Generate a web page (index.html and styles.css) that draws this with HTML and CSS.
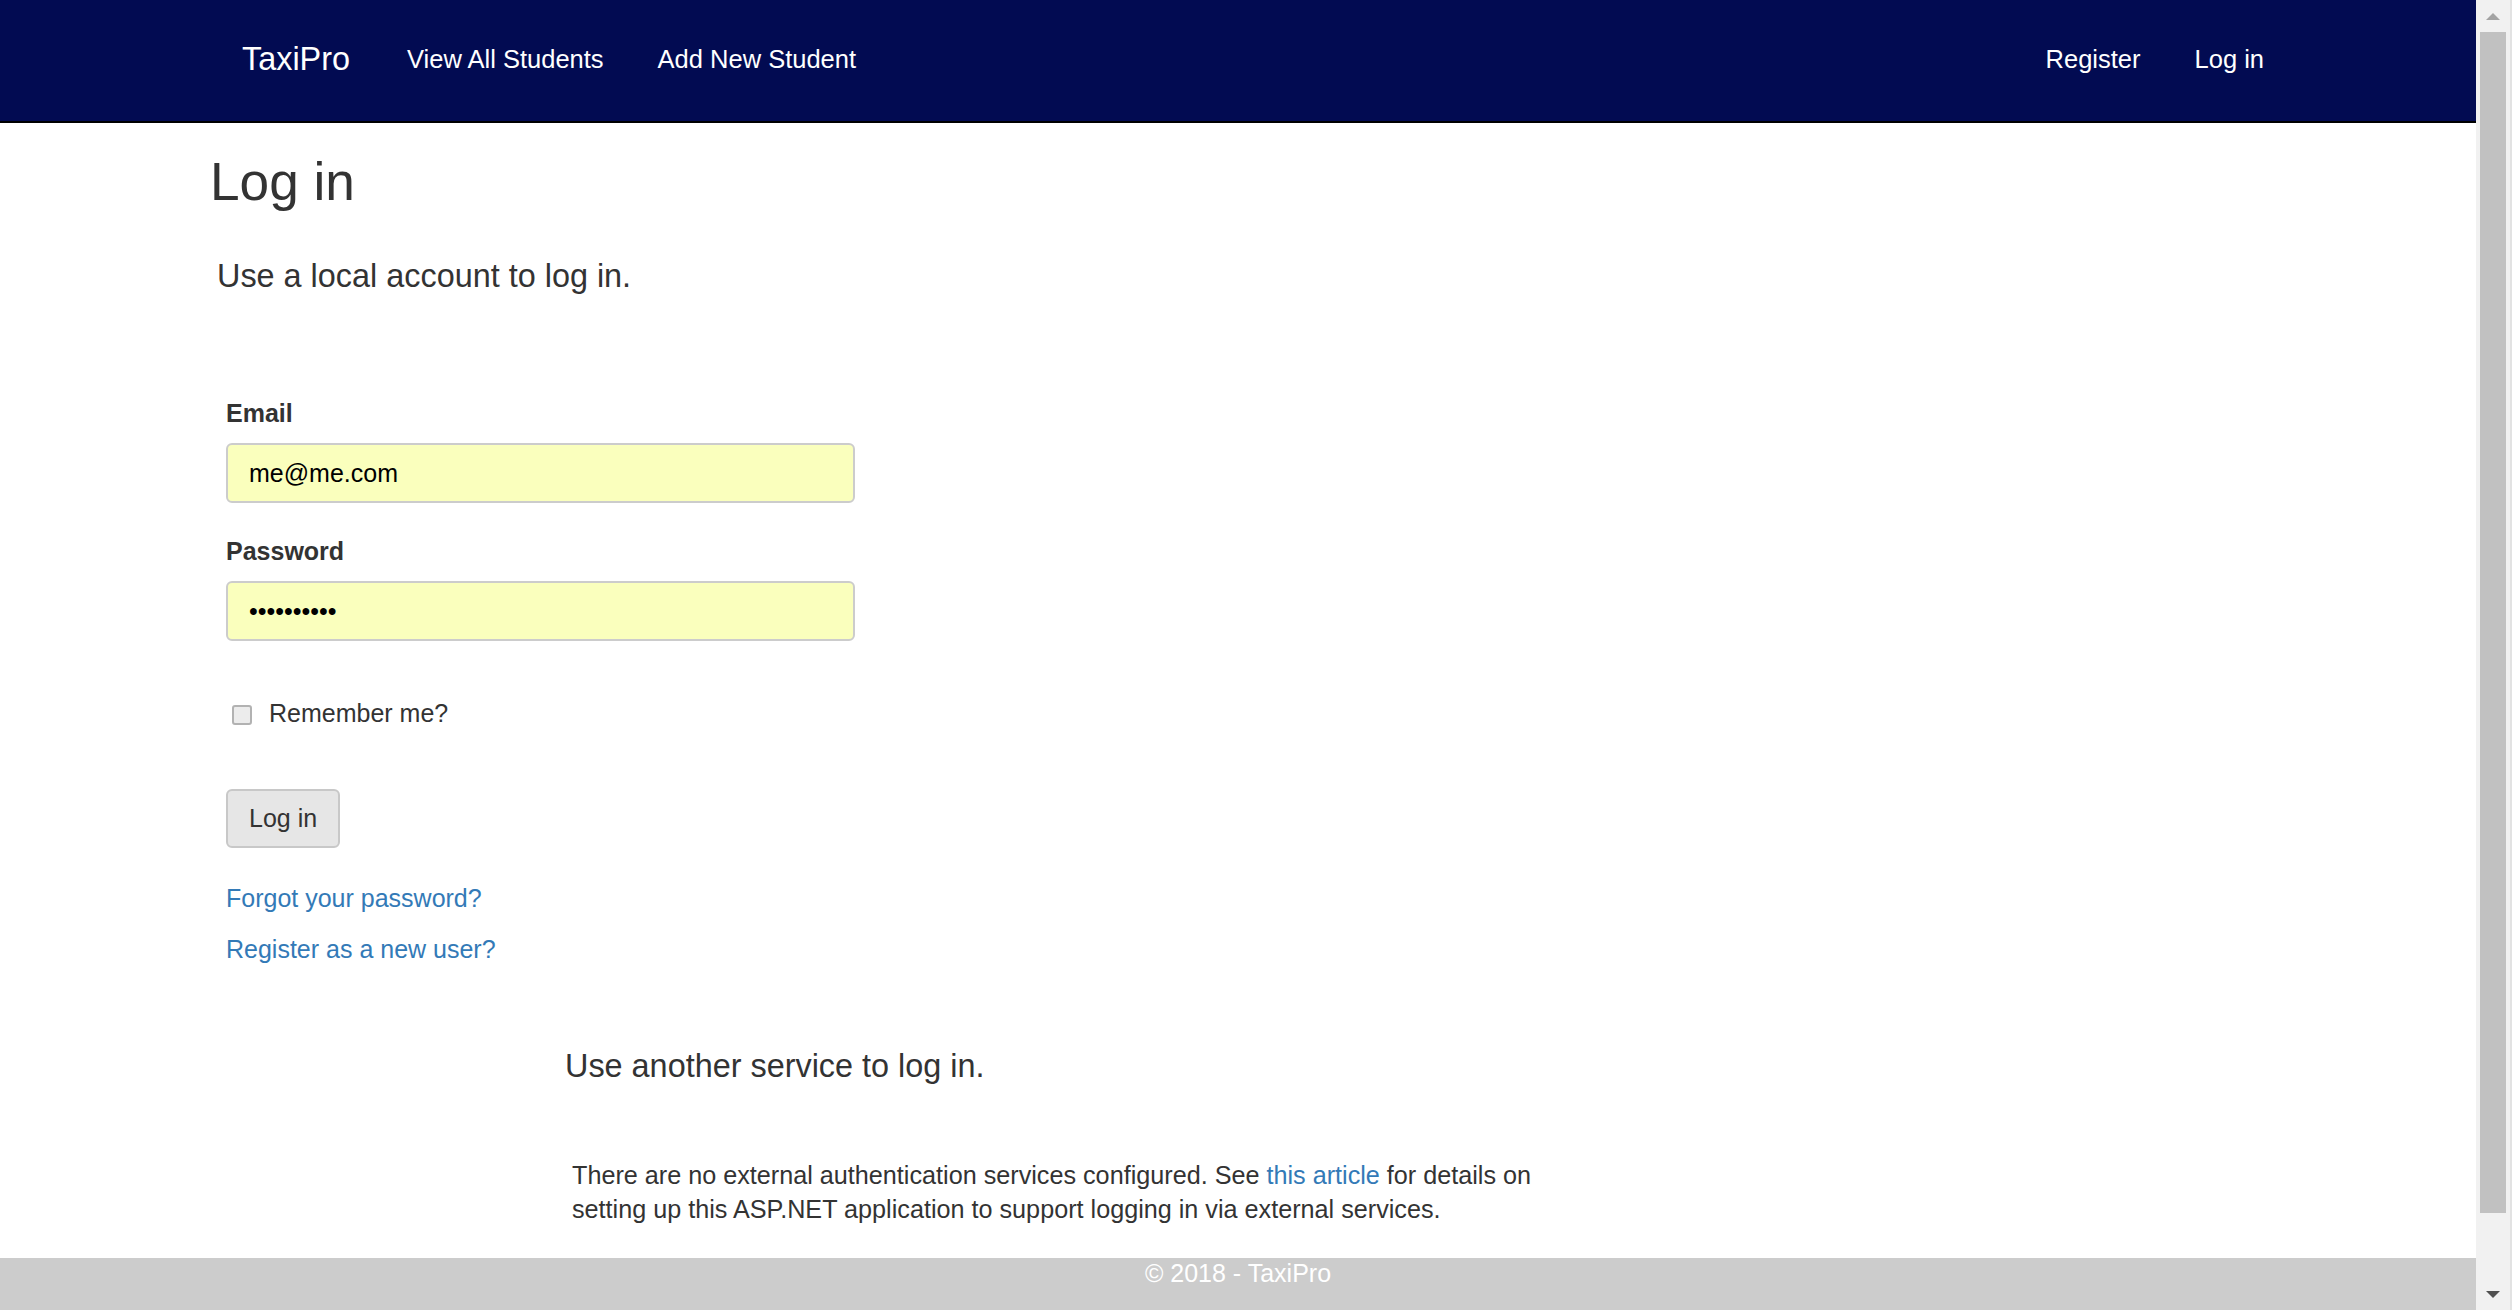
FILE: index.html
```html
<!DOCTYPE html>
<html lang="en">
<head>
<meta charset="utf-8">
<title>Log in - TaxiPro</title>
<link rel="stylesheet" href="styles.css">
</head>
<body>
<div class="window">
  <div class="page">
    <header class="navbar">
      <nav class="nav-left">
        <a class="brand" href="#">TaxiPro</a>
        <a class="nav-link" href="#">View All Students</a>
        <a class="nav-link" href="#">Add New Student</a>
      </nav>
      <nav class="nav-right">
        <a class="nav-link" href="#">Register</a>
        <a class="nav-link" href="#">Log in</a>
      </nav>
    </header>

    <main class="content">
      <h1 class="title">Log in</h1>
      <h4 class="lead">Use a local account to log in.</h4>

      <form class="login-form">
        <div class="group group-email">
          <label class="label">Email</label>
          <div class="field">me@me.com</div>
        </div>
        <div class="group group-password">
          <label class="label">Password</label>
          <div class="field field-pass">••••••••••</div>
        </div>
        <div class="check-row">
          <span class="checkbox"></span>
          <span class="check-text">Remember me?</span>
        </div>
        <div class="btn-row">
          <span class="btn">Log in</span>
        </div>
        <p class="link-line link-first"><a class="link" href="#">Forgot your password?</a></p>
        <p class="link-line"><a class="link" href="#">Register as a new user?</a></p>
      </form>

      <section class="external">
        <h4 class="lead lead-ext">Use another service to log in.</h4>
        <p class="ext-text"><span class="ext-line">There are no external authentication services configured. See <a class="link" href="#">this article</a> for details on</span><br><span class="ext-line">setting up this ASP.NET application to support logging in via external services.</span></p>
      </section>
    </main>

    <footer class="footer">© 2018 - TaxiPro</footer>
  </div>

  <div class="scrollbar">
    <div class="sb-btn"><span class="arrow-up"></span></div>
    <div class="sb-thumb"></div>
    <div class="sb-space"></div>
    <div class="sb-btn"><span class="arrow-down"></span></div>
  </div>
</div>
</body>
</html>
```

FILE: styles.css
```css
* { box-sizing: border-box; }

html, body {
  margin: 0;
  padding: 0;
  height: 100%;
  overflow: hidden;
}

body {
  font-family: "Liberation Sans", Arial, sans-serif;
  color: #333333;
  background: #ffffff;
}

.window {
  display: flex;
  width: 2512px;
  height: 1310px;
}

.page {
  flex: 1;
  display: flex;
  flex-direction: column;
  min-width: 0;
  height: 1310px;
}

/* ---------- navbar ---------- */
.navbar {
  height: 123px;
  flex: none;
  background: #020b52;
  border-bottom: 2px solid #000000;
  display: flex;
  align-items: center;
  justify-content: space-between;
  padding: 0 212px 2px 242px;
}

.nav-left,
.nav-right {
  display: flex;
  align-items: center;
  gap: 54px;
}

.nav-left a,
.nav-right a {
  color: #ffffff;
  text-decoration: none;
  white-space: nowrap;
}

.brand {
  font-size: 32.4px;
  margin-right: 3px;
}

.nav-link {
  font-size: 25.5px;
}

/* ---------- content ---------- */
.content {
  padding-left: 210px;
}

.title {
  margin: 30px 0 0 0;
  font-size: 53.2px;
  line-height: 57px;
  font-weight: normal;
  color: #333333;
}

.lead {
  margin: 48px 0 0 7px;
  font-size: 32.4px;
  line-height: 36px;
  font-weight: normal;
  color: #333333;
}

.login-form {
  margin: 101px 0 0 16px;
  width: 629px;
}

.label {
  display: block;
  font-size: 25px;
  line-height: 36px;
  font-weight: bold;
  margin-bottom: 12px;
}

.group-email { margin-bottom: 30px; }
.group-password { margin-bottom: 54px; }

.field {
  width: 629px;
  height: 60px;
  border: 2px solid #cccccc;
  border-radius: 6px;
  background: #faffbd;
  padding: 0 21px;
  display: flex;
  align-items: center;
  font-size: 25px;
  color: #000000;
}

.check-row {
  display: flex;
  align-items: center;
  height: 36px;
}

.checkbox {
  width: 20px;
  height: 20px;
  margin-left: 6px;
  margin-top: 3px;
  border: 2px solid #b2b2b2;
  border-radius: 3px;
  background: #ececec;
  flex: none;
}

.check-text {
  margin-left: 17px;
  font-size: 25px;
  line-height: 36px;
}

.btn-row {
  margin-top: 58px;
  display: flex;
}

.btn {
  height: 59px;
  padding: 0 21px;
  border: 2px solid #c8c8c8;
  border-radius: 6px;
  background: #e6e6e6;
  font-size: 25px;
  color: #333333;
  display: flex;
  align-items: center;
}

.link-line {
  margin: 15px 0 0 0;
  font-size: 25px;
  line-height: 36px;
}

.link-first {
  margin-top: 32px;
}

.link {
  color: #337ab7;
  text-decoration: none;
}

.external {
  margin: 81px 0 0 355px;
}

.lead-ext {
  margin: 0;
}

.ext-text {
  margin: 74px 0 0 7px;
  font-size: 25.2px;
  line-height: 34px;
  white-space: nowrap;
}

/* ---------- footer ---------- */
.footer {
  margin-top: auto;
  height: 52px;
  flex: none;
  background: #cccccc;
  color: #ffffff;
  text-align: center;
  font-size: 25px;
  line-height: 30px;
}

/* ---------- scrollbar ---------- */
.scrollbar {
  width: 36px;
  flex: none;
  background: #f1f1f1;
  display: flex;
  flex-direction: column;
  border-right: 2px solid #e2e2e2;
}

.sb-btn {
  height: 32px;
  flex: none;
  display: flex;
  align-items: center;
  justify-content: center;
}

.arrow-up {
  width: 0;
  height: 0;
  border-left: 7px solid transparent;
  border-right: 7px solid transparent;
  border-bottom: 7px solid #a3a3a3;
}

.arrow-down {
  width: 0;
  height: 0;
  border-left: 7px solid transparent;
  border-right: 7px solid transparent;
  border-top: 7px solid #505050;
}

.sb-thumb {
  height: 1181px;
  flex: none;
  margin: 0 4px 0 4px;
  background: #c1c1c1;
}

.sb-space {
  flex: 1;
}
```
